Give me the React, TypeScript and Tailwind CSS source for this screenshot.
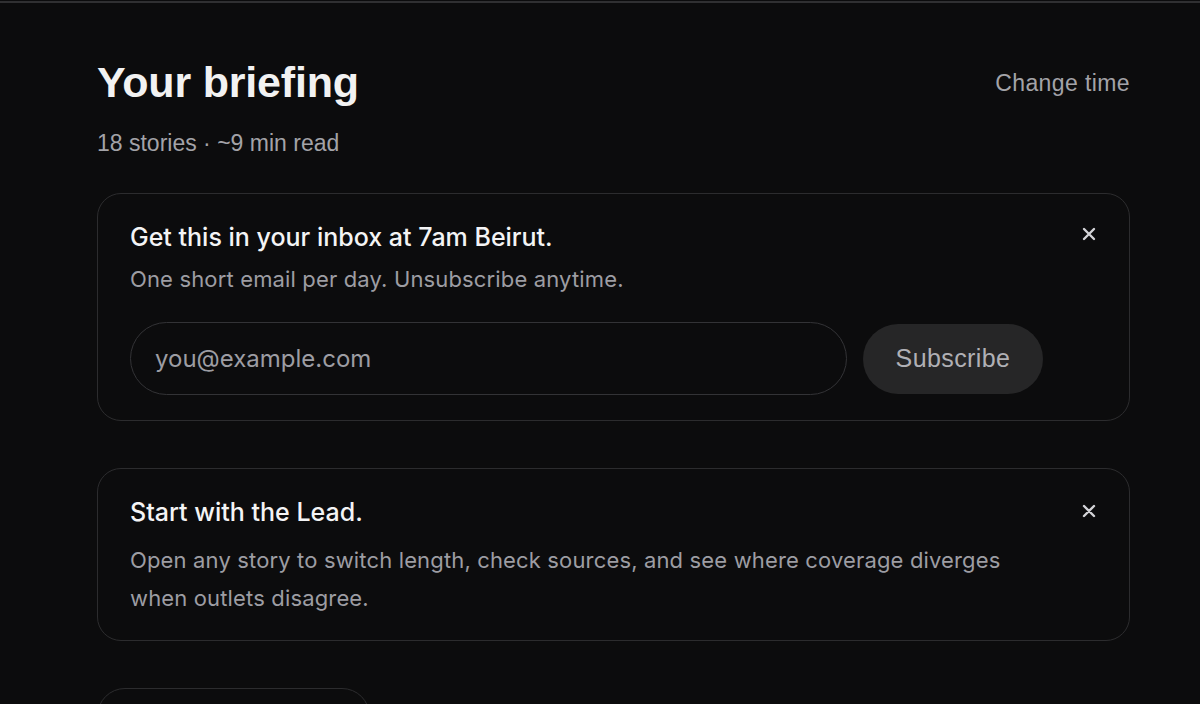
import React from "react";

const plex = { fontFamily: "Inter, 'Noto Sans', sans-serif" };

function CloseIcon() {
  return (
    <svg width="16" height="16" viewBox="0 0 16 16" fill="none">
      <path d="M3 3L13 13M13 3L3 13" stroke="#d4d4d8" strokeWidth="2.4" strokeLinecap="round" />
    </svg>
  );
}

export default function App() {
  return (
    <div className="h-[704px] w-full bg-[#0c0c0d] overflow-hidden" style={{ fontFamily: "'Liberation Sans', Arial, sans-serif" }}>
      <div className="pt-px">
        <div className="h-[2px] bg-[#303032]" />
      </div>
      <div className="mx-[97px] w-[1033px]">
        <div className="flex items-start justify-between pt-[55px]">
          <div>
            <h1 className="text-[43px] leading-[48px] font-bold tracking-[-0.2px] text-[#f2f2f2]">Your briefing</h1>
            <div className="mt-[23px] text-[23px] leading-[28px] text-[#a3a3a8]">18 stories · ~9 min read</div>
          </div>
          <button className="mt-[11px] text-[23px] leading-[28px] tracking-[0.4px] text-[#a3a3a8]">Change time</button>
        </div>

        <div className="relative mt-[36px] rounded-[24px] border border-[#2c2c2e] pl-[32px] pt-[28px] pb-[25px]" style={plex}>
          <div className="text-[25px] leading-[30px] font-medium text-[#f4f4f5]">Get this in your inbox at 7am Beirut.</div>
          <div className="mt-[13px] text-[22px] leading-[28px] tracking-[0.15px] text-[#9d9da3]">One short email per day. Unsubscribe anytime.</div>
          <div className="mt-[29px] flex items-center gap-[16px]">
            <div className="flex h-[73px] w-[717px] items-center rounded-full border border-[#333336] px-[24px]">
              <span className="text-[24px] text-[#9d9da3]">you@example.com</span>
            </div>
            <button className="h-[70px] w-[180px] rounded-full bg-[#262627] text-[25px] tracking-[0.4px] text-[#b0b0b5]" style={{ fontFamily: "'Liberation Sans', Arial, sans-serif" }}>
              Subscribe
            </button>
          </div>
          <button className="absolute right-[32px] top-[32px]">
            <CloseIcon />
          </button>
        </div>

        <div className="relative mt-[47px] rounded-[24px] border border-[#2c2c2e] pl-[32px] pt-[28px] pb-[23px]" style={plex}>
          <div className="text-[25px] leading-[30px] font-medium text-[#f4f4f5]">Start with the Lead.</div>
          <div className="mt-[14px] max-w-[900px] text-[22px] leading-[38px] tracking-[0.15px] text-[#9d9da3]">
            Open any story to switch length, check sources, and see where coverage diverges when outlets disagree.
          </div>
          <button className="absolute right-[32px] top-[34px]">
            <CloseIcon />
          </button>
        </div>

        <div className="mt-[47px] h-[60px] w-[273px] rounded-[28px] border border-[#2c2c2e]" />
      </div>
    </div>
  );
}
